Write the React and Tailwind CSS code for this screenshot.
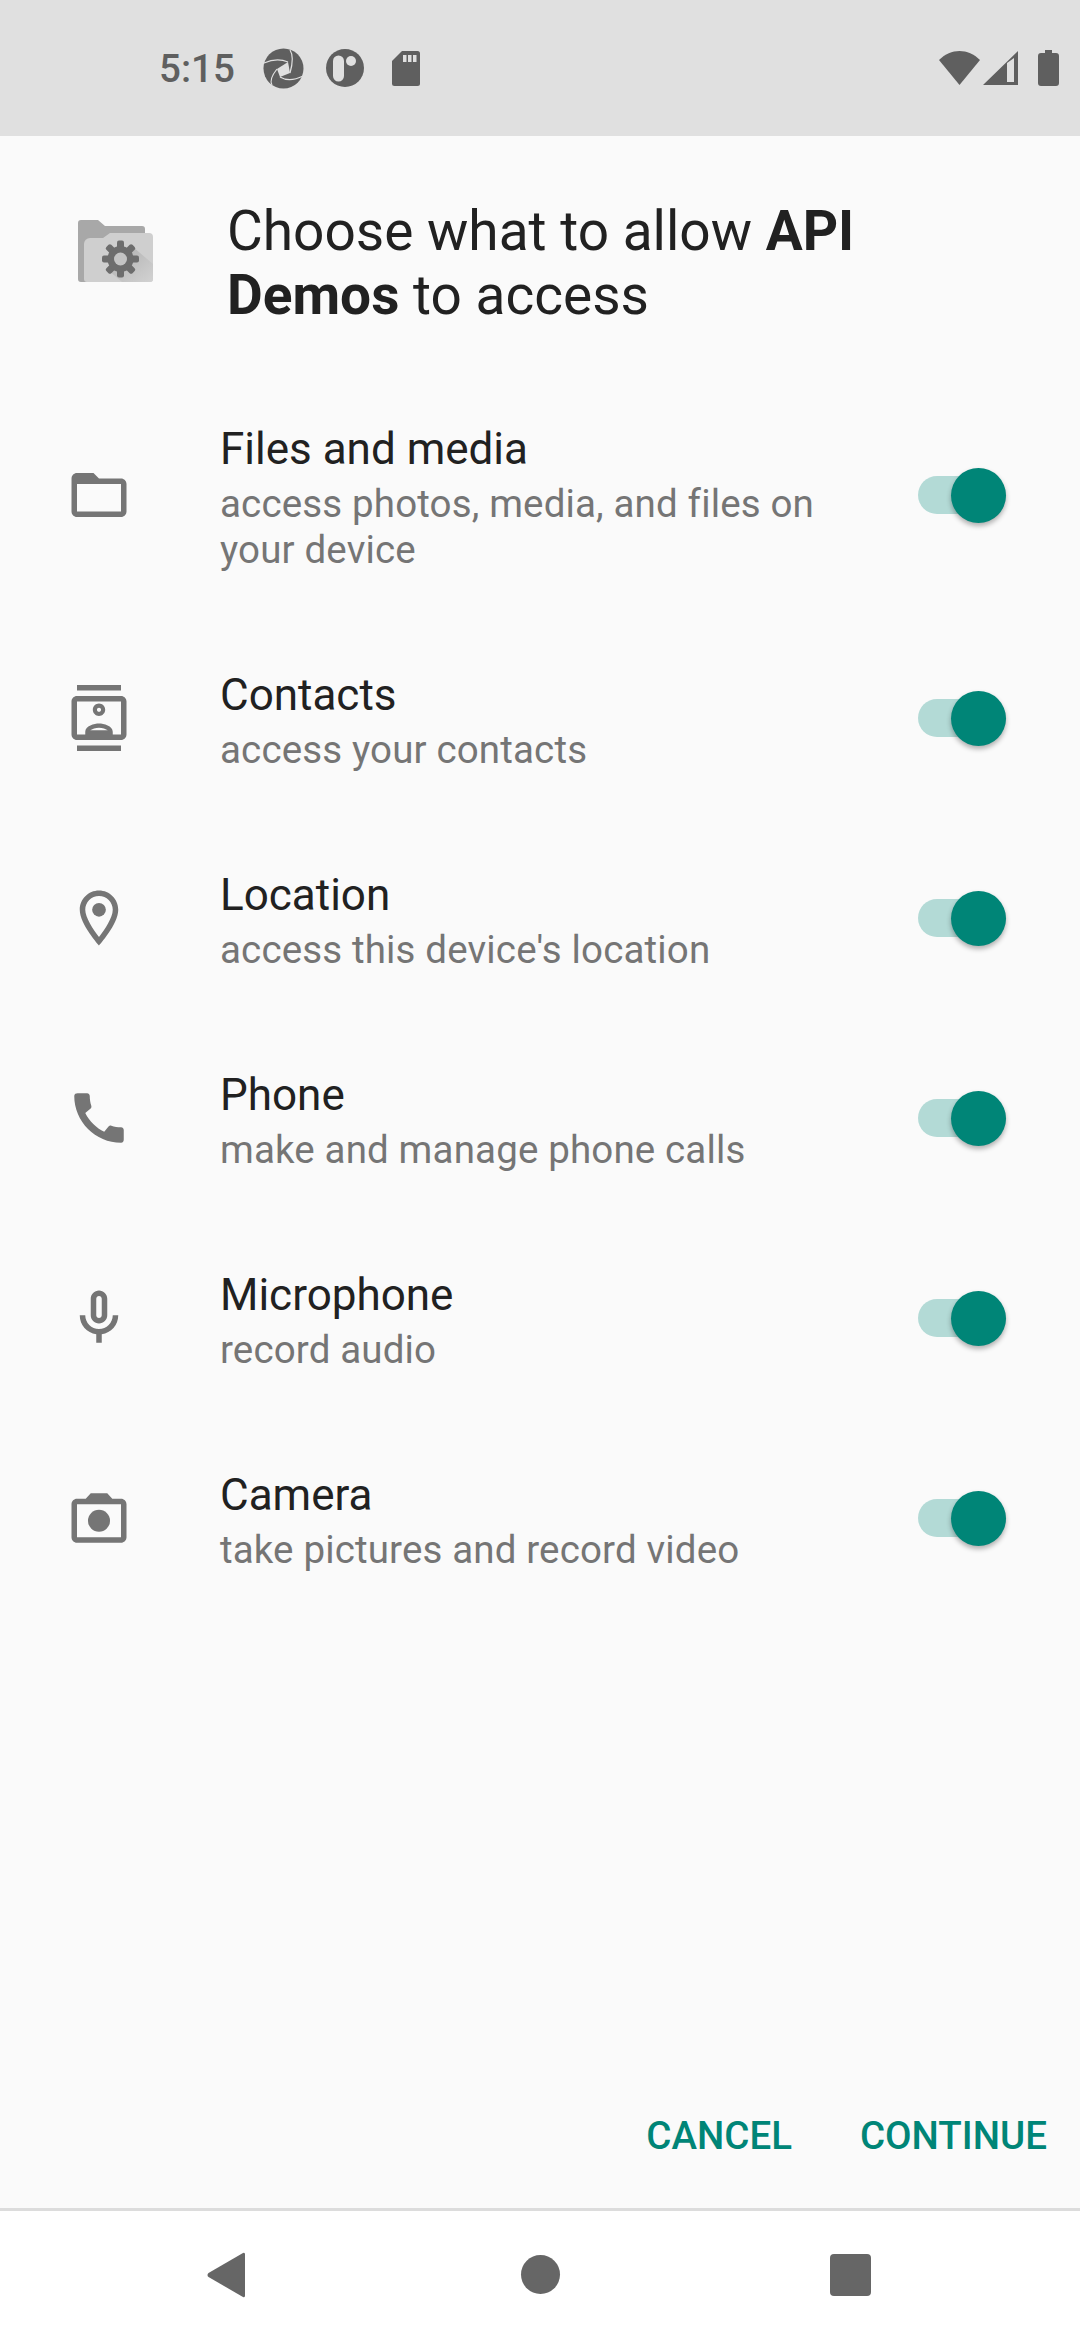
const font = { fontFamily: "Roboto, sans-serif" };

const icons = {
  folder: <path d="M20 6h-8l-2-2H4c-1.1 0-1.99.9-1.99 2L2 18c0 1.1.9 2 2 2h16c1.1 0 2-.9 2-2V8c0-1.1-.9-2-2-2zm0 12H4V8h16v10z" />,
  contacts: <path fillRule="evenodd" d="M20 0H4v2h16V0zM4 24h16v-2H4v2zM20 4H4c-1.1 0-2 .9-2 2v12c0 1.1.9 2 2 2h16c1.1 0 2-.9 2-2V6c0-1.1-.9-2-2-2zm0 14H4V6h16v12zm-8-6.75c1.24 0 2.25-1.01 2.25-2.25S13.24 6.75 12 6.75 9.75 7.76 9.75 9s1.01 2.25 2.25 2.25zm0-3c.41 0 .75.34.75.75s-.34.75-.75.75-.75-.34-.75-.75.34-.75.75-.75zM17 16.99c0-2.09-3.31-2.99-5-2.99s-5 .9-5 2.99V18h10v-1.01zm-8.19-.5c.61-.52 2.03-.99 3.19-.99 1.17 0 2.59.47 3.2.99H8.81z" />,
  location: (
    <>
      <path d="M12 2C8.13 2 5 5.13 5 9c0 5.25 7 13 7 13s7-7.75 7-13c0-3.87-3.13-7-7-7zM7 9c0-2.76 2.24-5 5-5s5 2.24 5 5c0 2.88-2.88 7.19-5 9.88C9.92 16.21 7 11.85 7 9z" />
      <circle cx="12" cy="9" r="2.5" />
    </>
  ),
  phone: <path d="M20.01 15.38c-1.23 0-2.42-.2-3.53-.56-.35-.12-.74-.03-1.01.24l-1.57 1.97c-2.83-1.35-5.48-3.9-6.89-6.83l1.95-1.66c.27-.28.35-.67.24-1.02-.37-1.11-.56-2.3-.56-3.53 0-.54-.45-.99-.99-.99H4.19C3.65 3 3 3.24 3 3.99 3 13.28 10.73 21 20.01 21c.71 0 .99-.63.99-1.18v-3.45c0-.54-.45-.99-.99-.99z" />,
  mic: <path d="M12 14c1.66 0 3-1.34 3-3V5c0-1.66-1.34-3-3-3S9 3.34 9 5v6c0 1.66 1.34 3 3 3zm-1-9c0-.55.45-1 1-1s1 .45 1 1v6c0 .55-.45 1-1 1s-1-.45-1-1V5zm6 6c0 2.76-2.24 5-5 5s-5-2.24-5-5H5c0 3.53 2.61 6.43 6 6.92V21h2v-3.08c3.39-.49 6-3.39 6-6.92h-2z" />,
  camera: (
    <>
      <path d="M20 5h-3.17L15 3H9L7.17 5H4c-1.1 0-2 .9-2 2v12c0 1.1.9 2 2 2h16c1.1 0 2-.9 2-2V7c0-1.1-.9-2-2-2zm0 14H4V7h16v12z" />
      <circle cx="12" cy="13" r="4" />
    </>
  ),
};

const rows = [
  { icon: "folder", label: "Files and media", summary: "access photos, media, and files on your device", h: "h-[246px]" },
  { icon: "contacts", label: "Contacts", summary: "access your contacts", h: "h-[200px]" },
  { icon: "location", label: "Location", summary: "access this device's location", h: "h-[200px]" },
  { icon: "phone", label: "Phone", summary: "make and manage phone calls", h: "h-[200px]" },
  { icon: "mic", label: "Microphone", summary: "record audio", h: "h-[200px]" },
  { icon: "camera", label: "Camera", summary: "take pictures and record video", h: "h-[200px]" },
];

function Toggle() {
  return (
    <div className="flex h-[38px] w-[88px] items-center justify-end rounded-full bg-[#b3dad6]">
      <div className="h-[55px] w-[55px] shrink-0 rounded-full bg-[#008577] shadow-[0_3px_5px_rgba(0,0,0,0.3)]" />
    </div>
  );
}

function Row({ icon, label, summary, h }) {
  return (
    <div className={`flex items-center pl-[66px] pr-[74px] ${h}`}>
      <svg viewBox="0 0 24 24" className="h-[66px] w-[66px] shrink-0 fill-[#757575]">
        {icons[icon]}
      </svg>
      <div className="ml-[88px] w-[640px]">
        <div className="text-[44px] leading-[64px] text-[#212121]">{label}</div>
        <div className="text-[38.5px] leading-[46px] tracking-[0.15px] text-[#757575]">{summary}</div>
      </div>
      <div className="ml-auto">
        <Toggle />
      </div>
    </div>
  );
}

function StatusBar() {
  return (
    <div className="flex h-[136px] items-center bg-[#e0e0e0] pl-[159px] pr-[21px] text-[#5f5f5f]">
      <span className="pt-[2px] text-[38.5px] font-medium leading-none">5:15</span>
      <svg viewBox="0 0 41 41" className="ml-[28px] h-[41px] w-[41px]">
        <circle cx="20.5" cy="20.5" r="20" fill="#5f5f5f" />
        <path d="M14 21 L25 14 L27 25 L17 29 Z" fill="#e0e0e0" />
        <path d="M1 15 C10 11 18 11 25 14 M27 2 C31 8 29 18 27 25 M40 28 C30 33 22 32 17 29 M9 37 C6 32 10 26 14 21" fill="none" stroke="#e0e0e0" strokeWidth="1.2" />
      </svg>
      <svg viewBox="0 0 38 38" className="ml-[22px] h-[38px] w-[38px]">
        <circle cx="19" cy="19" r="19" fill="#5f5f5f" />
        <rect x="7" y="6.5" width="11" height="26" rx="5.5" fill="#e0e0e0" />
        <circle cx="25" cy="12" r="5" fill="#e0e0e0" />
      </svg>
      <svg viewBox="0 0 28 35" className="ml-[28px] h-[35px] w-[28px]">
        <path d="M10 0H25.5A2.5 2.5 0 0 1 28 2.5V32.5A2.5 2.5 0 0 1 25.5 35H2.5A2.5 2.5 0 0 1 0 32.5V10Z" fill="#5f5f5f" />
        <rect x="11" y="4" width="3.5" height="7" fill="#e0e0e0" />
        <rect x="16" y="4" width="3.5" height="7" fill="#e0e0e0" />
        <rect x="21" y="4" width="3.5" height="7" fill="#e0e0e0" />
      </svg>
      <svg viewBox="0 0 41 34" className="ml-auto h-[34px] w-[41px]">
        <path d="M0 9 C12 -3 29 -3 41 9 L20.5 34 Z" fill="#5f5f5f" />
      </svg>
      <svg viewBox="0 0 35 34" className="ml-[3px] h-[34px] w-[35px]">
        <path fillRule="evenodd" d="M35 0V34H0ZM24 12V31H31V7Z" fill="#5f5f5f" />
      </svg>
      <svg viewBox="0 0 21 36" className="ml-[20px] h-[36px] w-[21px]">
        <path d="M7 0H14V3H18A3 3 0 0 1 21 6V33A3 3 0 0 1 18 36H3A3 3 0 0 1 0 33V6A3 3 0 0 1 3 3H7Z" fill="#5f5f5f" />
      </svg>
    </div>
  );
}

function HeaderIcon() {
  const teeth = [0, 45, 90, 135, 180, 225, 270, 315];
  return (
    <svg viewBox="0 0 75 62" className="h-[62px] w-[75px] shrink-0">
      <defs>
        <linearGradient id="fold" x1="0" y1="0" x2="1" y2="1">
          <stop offset="0" stopColor="#adadad" />
          <stop offset="1" stopColor="#d2d2d2" />
        </linearGradient>
      </defs>
      <path d="M3 0H20L27 6H64A3 3 0 0 1 67 9V62H3A3 3 0 0 1 0 59V3A3 3 0 0 1 3 0Z" fill="#a8a8a8" />
      <path d="M12 18H25L32 13H71A4 4 0 0 1 75 17V59A3 3 0 0 1 72 62H9A3 3 0 0 1 6 59V24A6 6 0 0 1 12 18Z" fill="#cfcfcf" />
      <path d="M55 27L75 44V59A3 3 0 0 1 72 62H44L30 50Z" fill="url(#fold)" />
      {teeth.map((a) => (
        <rect key={a} x="39" y="20.5" width="7" height="10" rx="2" fill="#6d6d6d" transform={`rotate(${a} 42.5 39)`} />
      ))}
      <circle cx="42.5" cy="39" r="13" fill="#6d6d6d" />
      <circle cx="42.5" cy="39" r="6.5" fill="#c4c4c4" />
    </svg>
  );
}

export default function App() {
  return (
    <div className="flex h-[2340px] w-[1080px] flex-col bg-[#fafafa]" style={font}>
      <StatusBar />
      <div className="flex flex-1 flex-col">
        <div className="flex h-[236px] items-start pl-[78px] pt-[63px]">
          <div className="pt-[21px]">
            <HeaderIcon />
          </div>
          <h1 className="ml-[74px] w-[700px] text-[55px] font-normal leading-[64px] text-[#212121]">
            Choose what to allow <b className="font-bold">API Demos</b> to access
          </h1>
        </div>
        {rows.map((r) => (
          <Row key={r.label} {...r} />
        ))}
        <div className="mt-auto flex justify-end gap-[68px] pb-[53px] pr-[33px] text-[38.5px] font-medium leading-none text-[#008577]">
          <span>CANCEL</span>
          <span>CONTINUE</span>
        </div>
      </div>
      <div className="flex h-[132px] items-center border-t-[3px] border-[#dcdcdc] bg-white">
        <div className="flex w-full items-center pb-[2px]">
          <svg viewBox="0 0 38 46" className="ml-[207px] h-[46px] w-[38px]">
            <path d="M36 1L1.5 21a2.5 2.5 0 0 0 0 4L36 45a1.5 1.5 0 0 0 2-1V2a1.5 1.5 0 0 0-2-1Z" fill="#666" />
          </svg>
          <div className="ml-[276px] h-[39px] w-[39px] rounded-full bg-[#666]" />
          <div className="ml-[270px] h-[42px] w-[41px] rounded-[4px] bg-[#666]" />
        </div>
      </div>
    </div>
  );
}
